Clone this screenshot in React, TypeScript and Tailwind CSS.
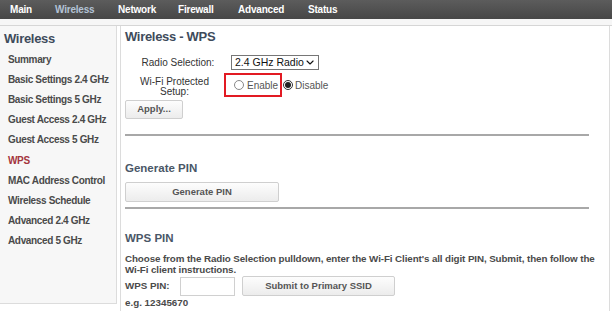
import { ChevronDown } from 'lucide-react'

const navItems = [
  { label: "Main", w: "w-[45px]", active: false },
  { label: "Wireless", w: "w-[63px]", active: true },
  { label: "Network", w: "w-[60px]", active: false },
  { label: "Firewall", w: "w-[60px]", active: false },
  { label: "Advanced", w: "w-[70px]", active: false },
  { label: "Status", w: "w-[60px]", active: false },
]

const sideItems = [
  "Summary",
  "Basic Settings 2.4 GHz",
  "Basic Settings 5 GHz",
  "Guest Access 2.4 GHz",
  "Guest Access 5 GHz",
  "WPS",
  "MAC Address Control",
  "Wireless Schedule",
  "Advanced 2.4 GHz",
  "Advanced 5 GHz",
]

const Radio = ({ checked }: { checked: boolean }) => (
  <span
    className={`inline-flex w-[10px] h-[10px] rounded-full items-center justify-center border ${
      checked ? "border-[#333]" : "border-[#888]"
    } bg-white`}
  >
    {checked && <span className="w-[6px] h-[6px] rounded-full bg-[#222]" />}
  </span>
)

const Button = ({ label, className }: { label: string; className: string }) => (
  <button
    className={`${className} border border-[#cfcfcf] rounded-[2px] bg-gradient-to-b from-[#fdfdfd] to-[#ececec] text-[9.5px] font-bold text-[#555] flex items-center justify-center`}
  >
    {label}
  </button>
)

export default function App() {
  return (
    <div className="w-[612px] h-[311px] overflow-hidden bg-white font-['Liberation_Sans',Arial,sans-serif]">
      {/* Top nav */}
      <div className="h-[19px] bg-gradient-to-b from-[#5c5c5c] to-[#474747] flex items-center pl-[10px]">
        {navItems.map((n) => (
          <span
            key={n.label}
            className={`${n.w} text-[10px] font-bold tracking-[-0.2px] ${n.active ? "text-[#b3c3d6]" : "text-white"}`}
          >
            {n.label}
          </span>
        ))}
      </div>
      <div className="h-[7px] bg-[#f6f6f6] border-b border-[#d6d6d6]" />

      <div className="flex">
        {/* Sidebar */}
        <div className="w-[117px] h-[278px] bg-[#f7f7f7] border-r border-b border-[#dcdcdc] shrink-0">
          <div className="pl-[4px] pt-[5px] h-[23px] text-[13px] leading-[16px] font-bold text-[#3e4b5b] tracking-[-0.3px]">
            Wireless
          </div>
          <div className="flex flex-col pl-[8px]">
            {sideItems.map((s) => (
              <div
                key={s}
                className={`h-[20.2px] flex items-center text-[10px] font-bold tracking-[-0.35px] ${
                  s === "WPS" ? "text-[#a4343c]" : "text-[#4a4a4a]"
                }`}
              >
                {s}
              </div>
            ))}
          </div>
        </div>

        {/* Main panel */}
        <div className="ml-[3px] w-[490px] h-[290px] border-l border-r border-[#dcdcdc] pl-[4px] pr-[20px]">
          <div className="pt-[3px] text-[13px] leading-[16px] font-bold text-[#3e4b5b] tracking-[-0.3px]">
            Wireless - WPS
          </div>

          <div className="mt-[10px] flex items-center h-[14px]">
            <span className="w-[106px] text-center text-[10px] text-[#333]">Radio Selection:</span>
            <span className="w-[88px] h-[15px] border border-[#767676] flex items-center justify-between pl-[3px] pr-[2px] text-[10.5px] leading-[13px] whitespace-nowrap text-[#111]">
              2.4 GHz Radio
              <ChevronDown size={13} strokeWidth={2.2} />
            </span>
          </div>

          <div className="mt-[4px] flex items-center h-[24px]">
            <span className="w-[99px] pt-[4px] text-center text-[10px] leading-[10px] text-[#333]">
              Wi-Fi Protected
              <br />
              Setup:
            </span>
            <div className="flex items-center h-[24px] w-[58px] pl-[8px] border-2 border-[#e21a23]">
              <Radio checked={false} />
              <span className="ml-[3px] text-[10px] text-[#555]">Enable</span>
            </div>
            <span className="ml-[1px] flex items-center">
              <Radio checked />
            </span>
            <span className="ml-[2px] text-[10px] text-[#555]">Disable</span>
          </div>

          <Button label="Apply..." className="mt-[3px] w-[58px] h-[19px]" />

          <div className="mt-[15px] h-[2px] bg-[#a8a8a8]" />

          <div className="mt-[25px] text-[11.5px] leading-[14px] font-bold text-[#4a5767]">Generate PIN</div>
          <Button label="Generate PIN" className="mt-[7px] w-[154px] h-[20px]" />
          <div className="mt-[5px] h-[2px] bg-[#a8a8a8]" />

          <div className="mt-[22px] text-[11.5px] leading-[14px] font-bold text-[#4a5767]">WPS PIN</div>
          <p className="mt-[8px] w-[480px] text-[9.8px] leading-[11px] font-bold text-[#4a4a4a] tracking-[-0.1px]">
            Choose from the Radio Selection pulldown, enter the Wi-Fi Client's all digit PIN, Submit, then follow the
            Wi-Fi client instructions.
          </p>
          <div className="mt-[1px] flex items-center h-[20px]">
            <span className="w-[55px] text-[9.8px] font-bold text-[#4a4a4a]">WPS PIN:</span>
            <span className="w-[55px] h-[19px] border border-[#d0d0d0] bg-white" />
            <Button label="Submit to Primary SSID" className="ml-[7px] w-[153px] h-[20px]" />
          </div>
          <div className="mt-[1px] text-[9.8px] leading-[11px] font-bold text-[#4a4a4a]">e.g. 12345670</div>
          <div className="mt-[3px] h-[2px] bg-[#a8a8a8]" />
        </div>
      </div>
    </div>
  )
}
